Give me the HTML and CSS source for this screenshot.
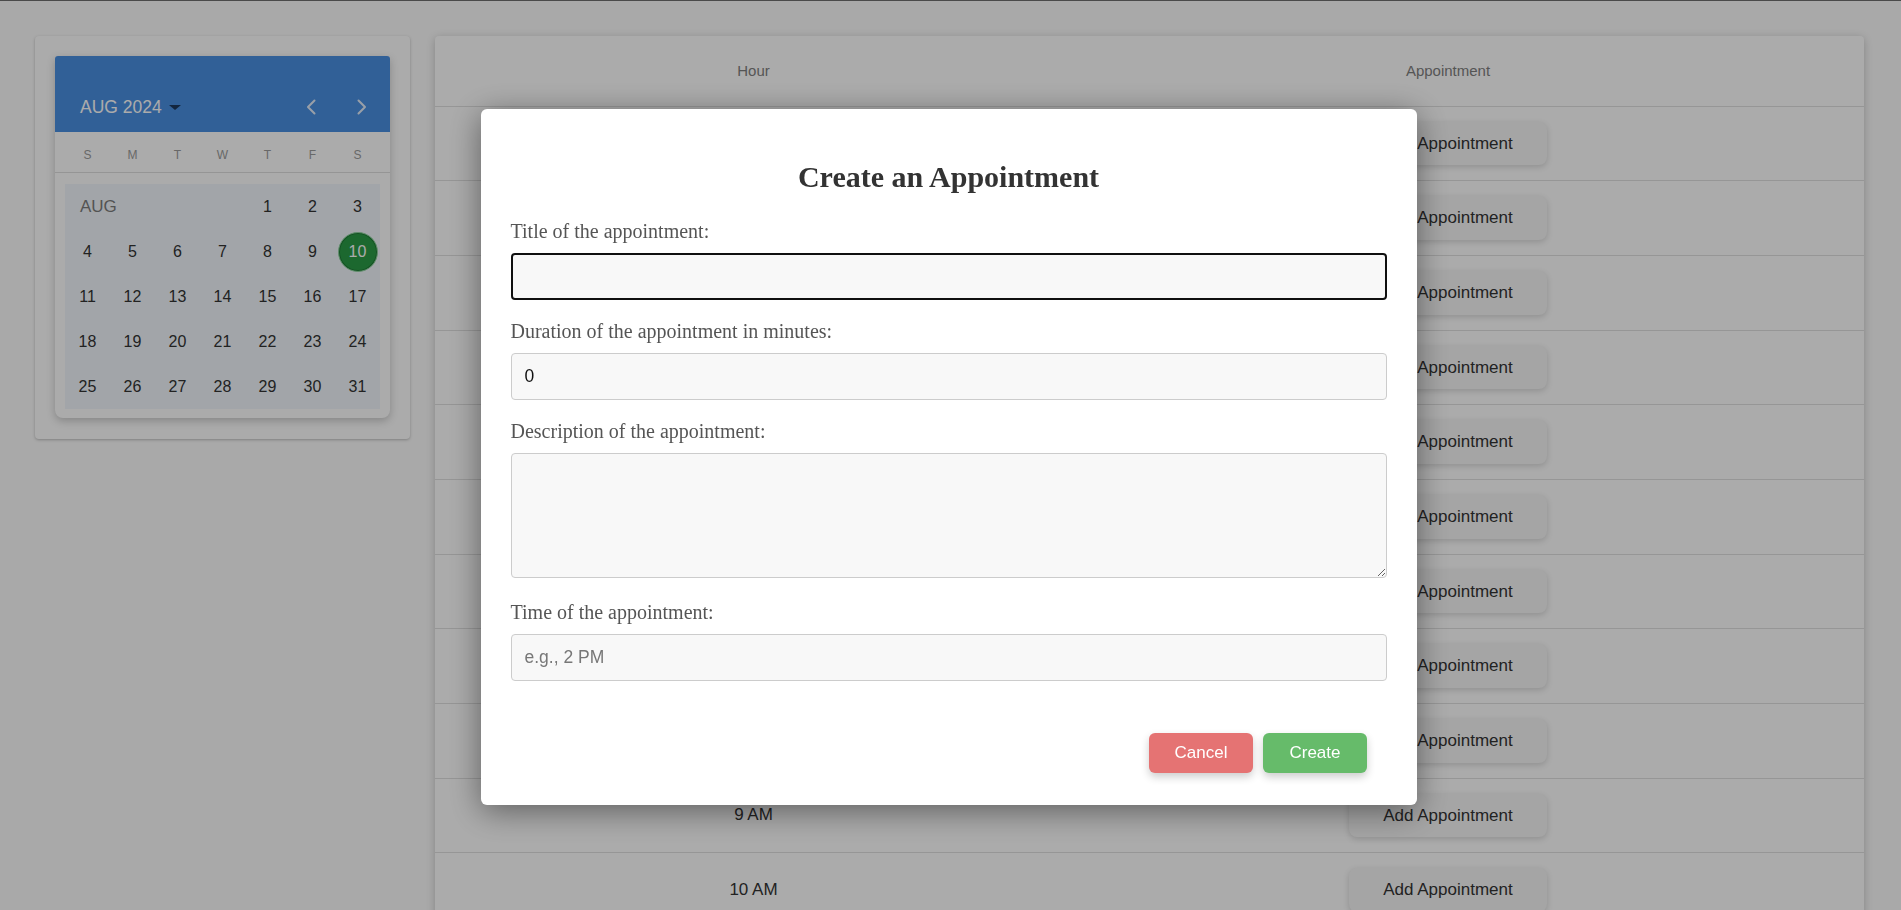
FILE: index.html
```html
<!DOCTYPE html>
<html lang="en">
<head>
<meta charset="utf-8">
<title>Appointments</title>
<link rel="stylesheet" href="styles.css">
</head>
<body>
<div class="page">
  <aside class="side-card">
    <div class="calendar">
      <div class="cal-header">
        <div class="cal-title">AUG 2024<span class="caret"></span></div>
        <div class="cal-nav">
          <svg class="chev" width="10" height="16" viewBox="0 0 10 16"><polyline points="8.5,1.5 2,8 8.5,14.5"/></svg>
          <svg class="chev" width="10" height="16" viewBox="0 0 10 16"><polyline points="1.5,1.5 8,8 1.5,14.5"/></svg>
        </div>
      </div>
      <div class="cal-weekdays">
        <span>S</span><span>M</span><span>T</span><span>W</span><span>T</span><span>F</span><span>S</span>
      </div>
      <div class="cal-body">
        <div class="cal-grid">
          <span class="month-label">AUG</span>
          <span class="day">1</span><span class="day">2</span><span class="day">3</span>
          <span class="day">4</span><span class="day">5</span><span class="day">6</span><span class="day">7</span><span class="day">8</span><span class="day">9</span><span class="day"><span class="selected">10</span></span>
          <span class="day">11</span><span class="day">12</span><span class="day">13</span><span class="day">14</span><span class="day">15</span><span class="day">16</span><span class="day">17</span>
          <span class="day">18</span><span class="day">19</span><span class="day">20</span><span class="day">21</span><span class="day">22</span><span class="day">23</span><span class="day">24</span>
          <span class="day">25</span><span class="day">26</span><span class="day">27</span><span class="day">28</span><span class="day">29</span><span class="day">30</span><span class="day">31</span>
        </div>
      </div>
    </div>
  </aside>

  <main class="schedule">
    <div class="sched-head"><div>Hour</div><div>Appointment</div></div>
    <div class="sched-row"><div>12 AM</div><div><button class="add-btn">Add Appointment</button></div></div>
    <div class="sched-row"><div>1 AM</div><div><button class="add-btn">Add Appointment</button></div></div>
    <div class="sched-row"><div>2 AM</div><div><button class="add-btn">Add Appointment</button></div></div>
    <div class="sched-row"><div>3 AM</div><div><button class="add-btn">Add Appointment</button></div></div>
    <div class="sched-row"><div>4 AM</div><div><button class="add-btn">Add Appointment</button></div></div>
    <div class="sched-row"><div>5 AM</div><div><button class="add-btn">Add Appointment</button></div></div>
    <div class="sched-row"><div>6 AM</div><div><button class="add-btn">Add Appointment</button></div></div>
    <div class="sched-row"><div>7 AM</div><div><button class="add-btn">Add Appointment</button></div></div>
    <div class="sched-row"><div>8 AM</div><div><button class="add-btn">Add Appointment</button></div></div>
    <div class="sched-row"><div>9 AM</div><div><button class="add-btn">Add Appointment</button></div></div>
    <div class="sched-row"><div>10 AM</div><div><button class="add-btn">Add Appointment</button></div></div>
    <div class="sched-row"><div>11 AM</div><div><button class="add-btn">Add Appointment</button></div></div>
    <div class="sched-row"><div>12 PM</div><div><button class="add-btn">Add Appointment</button></div></div>
  </main>
</div>

<div class="overlay"></div>

<div class="modal">
  <h2 class="modal-title">Create an Appointment</h2>
  <div class="field">
    <label class="field-label" for="f-title">Title of the appointment:</label>
    <input id="f-title" class="input is-focused" type="text">
  </div>
  <div class="field">
    <label class="field-label" for="f-dur">Duration of the appointment in minutes:</label>
    <input id="f-dur" class="input" type="text" value="0">
  </div>
  <div class="field field-area">
    <label class="field-label" for="f-desc">Description of the appointment:</label>
    <textarea id="f-desc" class="input textarea"></textarea>
  </div>
  <div class="field">
    <label class="field-label" for="f-time">Time of the appointment:</label>
    <input id="f-time" class="input" type="text" placeholder="e.g., 2 PM">
  </div>
  <div class="actions">
    <button class="btn btn-cancel">Cancel</button>
    <button class="btn btn-create">Create</button>
  </div>
</div>
</body>
</html>
```

FILE: styles.css
```css
html, body {
  margin: 0;
  padding: 0;
  height: 100%;
}

html {
  border-top: 1px solid #6f6f6f;
  box-sizing: border-box;
}

body {
  background: #fcfcfc;
  overflow: hidden;
  font-family: "Liberation Sans", Arial, sans-serif;
}

.page {
  display: flex;
  align-items: flex-start;
  gap: 25px;
  padding: 35px 37px 0 35px;
}

/* ---------- Calendar card ---------- */
.side-card {
  width: 375px;
  flex: none;
  box-sizing: border-box;
  padding: 20px 20px 21px;
  background: #ffffff;
  border-radius: 4px;
  box-shadow: 0 1px 3px rgba(0, 0, 0, 0.25);
}

.calendar {
  background: #ffffff;
  border-radius: 3px 3px 8px 8px;
  box-shadow: 0 3px 8px rgba(0, 0, 0, 0.22);
  overflow: hidden;
}

.cal-header {
  height: 76px;
  box-sizing: border-box;
  padding: 26px 23px 0 25px;
  background: #4a90e2;
  display: flex;
  align-items: center;
  justify-content: space-between;
}

.cal-title {
  color: #ffffff;
  font-size: 17.5px;
  line-height: 20px;
  display: flex;
  align-items: center;
}

.caret {
  margin-left: 7px;
  width: 0;
  height: 0;
  border-left: 6px solid transparent;
  border-right: 6px solid transparent;
  border-top: 5px solid #1d3a5f;
}

.cal-nav {
  display: flex;
  align-items: center;
  gap: 41px;
}

.chev {
  display: block;
  fill: none;
  stroke: rgba(255, 255, 255, 0.85);
  stroke-width: 2;
  stroke-linecap: round;
  stroke-linejoin: round;
}

.cal-weekdays {
  height: 41px;
  box-sizing: border-box;
  padding: 5px 10px 0;
  display: grid;
  grid-template-columns: repeat(7, 45px);
  align-items: center;
  justify-items: center;
  border-bottom: 1px solid #dedede;
  color: #9c9c9c;
  font-size: 12px;
}

.cal-body {
  padding: 11px 10px 9px;
}

.cal-grid {
  display: grid;
  grid-template-columns: repeat(7, 45px);
  grid-auto-rows: 45px;
  background: #f2f7fc;
  color: #333333;
  font-size: 16px;
}

.month-label {
  grid-column: 1 / span 4;
  display: flex;
  align-items: center;
  padding-left: 15px;
  color: #7d7d7d;
  font-size: 17px;
}

.day {
  display: flex;
  align-items: center;
  justify-content: center;
}

.selected {
  width: 40px;
  height: 40px;
  box-sizing: border-box;
  border-radius: 50%;
  background: #2b9c46;
  border: 1px solid #8fd0a0;
  box-shadow: inset 0 0 0 1px #1f7a36;
  color: #ffffff;
  display: flex;
  align-items: center;
  justify-content: center;
}

/* ---------- Schedule table ---------- */
.schedule {
  flex: 1;
  background: #ffffff;
  border-radius: 4px;
  box-shadow: 0 2px 8px rgba(0, 0, 0, 0.22);
  overflow: hidden;
}

.sched-head,
.sched-row {
  display: grid;
  grid-template-columns: 637px 752px;
  align-items: center;
  justify-items: center;
  box-sizing: border-box;
  border-bottom: 1px solid #e0e0e0;
}

.sched-head {
  height: 70.67px;
  font-size: 15px;
  color: #7f7f7f;
}

.sched-row {
  height: 74.67px;
  font-size: 17px;
  color: #333333;
}

.add-btn {
  font-family: "Liberation Sans", Arial, sans-serif;
  font-size: 17px;
  line-height: 19.67px;
  color: #333333;
  background: #f6f6f6;
  border: none;
  border-radius: 8px;
  padding: 12px 34px;
  box-shadow: 0 2px 6px rgba(0, 0, 0, 0.16);
}

/* ---------- Modal ---------- */
.overlay {
  position: fixed;
  inset: 0;
  background: rgba(0, 0, 0, 0.33);
}

.modal {
  position: fixed;
  top: 109px;
  left: 50%;
  margin-left: -470px;
  width: 936px;
  box-sizing: border-box;
  padding: 30px 30px 32px;
  background: #ffffff;
  border-radius: 6px;
  box-shadow: 0 6px 32px rgba(0, 0, 0, 0.45);
}

.modal-title {
  margin: 21px 0 25px;
  text-align: center;
  font-family: "Liberation Serif", "Times New Roman", serif;
  font-weight: bold;
  font-size: 30px;
  line-height: 34.5px;
  color: #333333;
}

.field {
  margin-bottom: 20px;
}

.field-area {
  margin-bottom: 23px;
}

.field-label {
  display: block;
  margin-bottom: 11px;
  font-family: "Liberation Serif", "Times New Roman", serif;
  font-size: 20px;
  line-height: 22px;
  color: #555555;
}

.input {
  display: block;
  width: 100%;
  height: 47px;
  box-sizing: border-box;
  padding: 0 13px;
  font-family: "Liberation Sans", Arial, sans-serif;
  font-size: 17.5px;
  color: #111111;
  background: #f8f8f8;
  border: 1px solid #cccccc;
  border-radius: 4px;
  outline: none;
}

.input::placeholder {
  color: #777777;
}

.is-focused {
  border: 2px solid #101010;
  padding: 0 12px;
}

.textarea {
  height: 125px;
  padding: 12px 13px;
  resize: both;
}

.actions {
  display: flex;
  justify-content: flex-end;
  gap: 10px;
  margin-top: 52px;
  padding-right: 20px;
}

.btn {
  font-family: "Liberation Sans", Arial, sans-serif;
  font-size: 17px;
  line-height: 20.5px;
  color: #ffffff;
  border: none;
  border-radius: 6px;
  padding: 10px 26px;
  box-shadow: 0 4px 8px rgba(0, 0, 0, 0.2);
}

.btn-cancel {
  background: #e57373;
}

.btn-create {
  background: #66bb6a;
}
```
